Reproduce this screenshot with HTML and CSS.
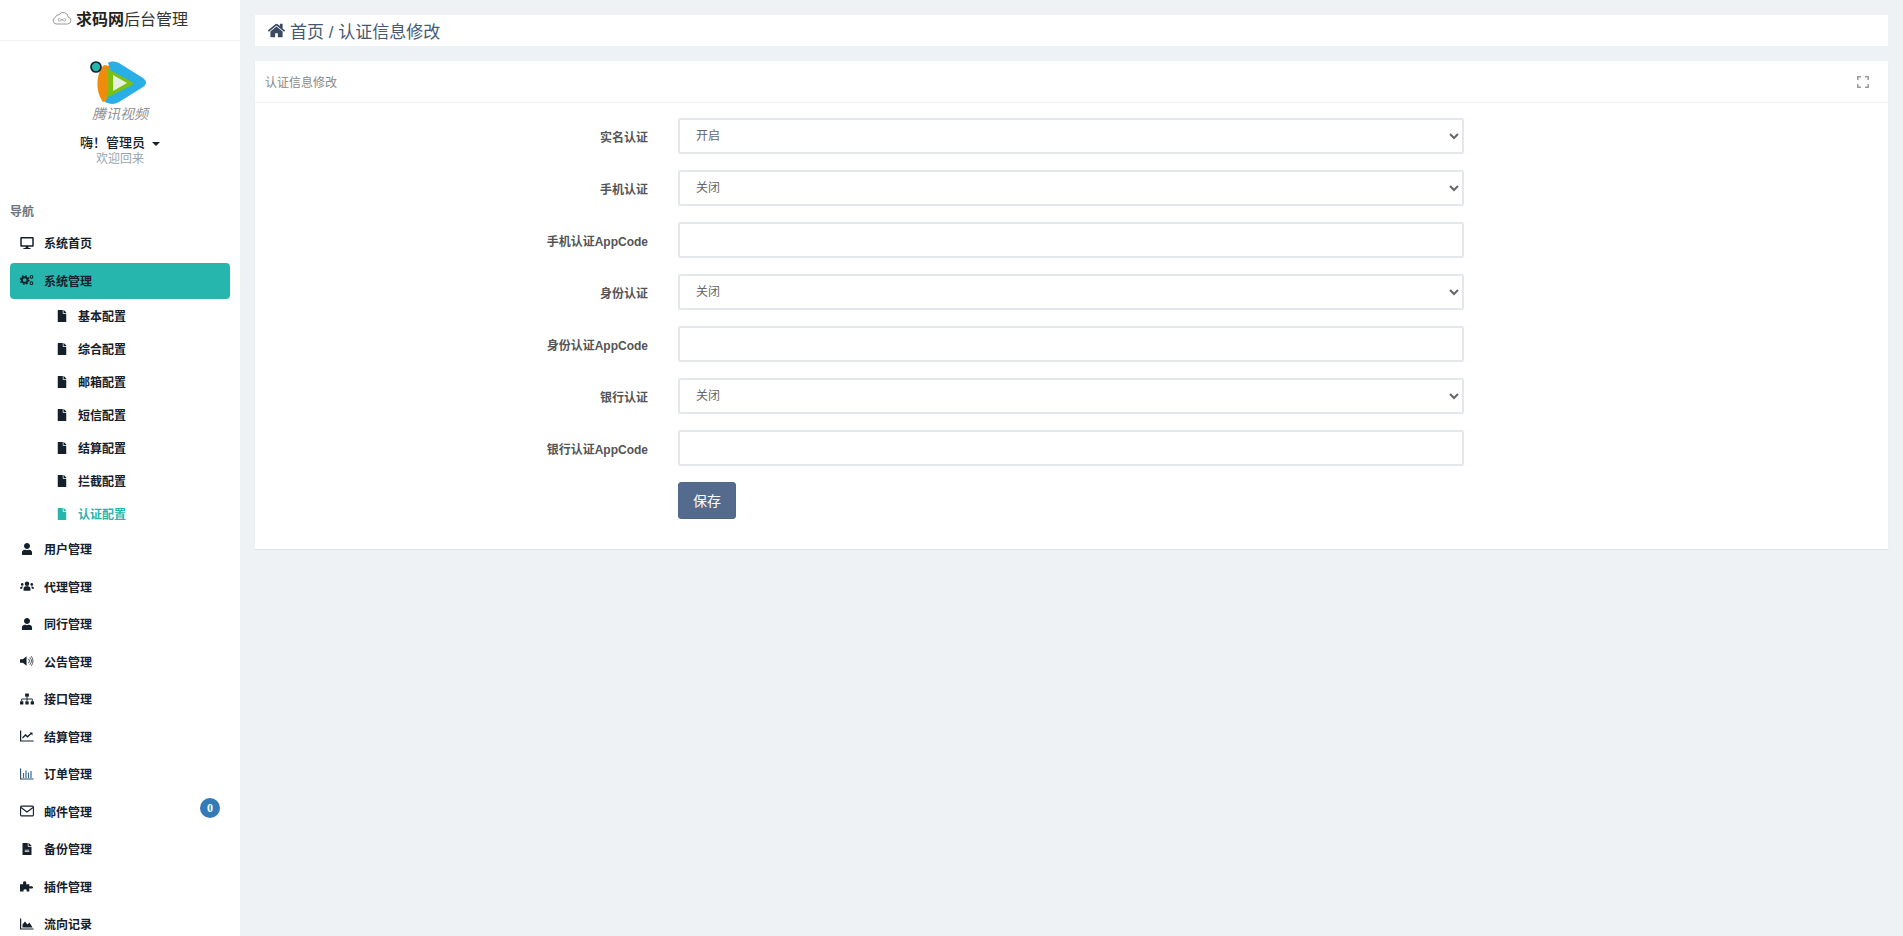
FILE: index.html
```html
<!DOCTYPE html>
<html lang="en">

<head>
    <meta charset="UTF-8">
    <meta name="viewport" content="width=device-width, initial-scale=1.0">
    <title>认证信息修改</title>
    <link rel="stylesheet" href="styles.css">
</head>

<body>
    <aside class="sidebar">
        <div class="brand">
            <svg class="brand-icon" viewBox="0 0 20 14"><path d="M5 13h10.500a3.500 3.500 0 0 0 .7-6.900A5 5 0 0 0 7 3.800 3 3 0 0 0 3.500 6.400 3.400 3.400 0 0 0 5 13z" fill="none" stroke="#999" stroke-width="1"/><path d="M7.500 7.500a1.300 1.300 0 1 0 0 2.600c1.500 0 3.500-2.600 5-2.600a1.300 1.300 0 1 1 0 2.600c-1.500 0-3.500-2.600-5-2.600z" fill="none" stroke="#999" stroke-width=".8"/></svg>
            <b>求码网</b><span>后台管理</span>
        </div>

        <div class="user">
            <div class="logo">
                <svg viewBox="0 0 60 46" width="60" height="46">
                    <path d="M14 5C7 11 4 30 13 42l8-2L20 6z" fill="#f08c0c"/>
                    <path d="M18 3c2-2 7-2 11 0l24 15c4 3 4 6 0 9L29 42c-5 3-10 2-14 0 7-10 8-28 3-39z" fill="#29aee6"/>
                    <path d="M16 8l26 14c2 1 2 2 0 3L16 38c3-10 3-20 0-30z" fill="#7cc10f"/>
                    <path d="M23 15l14 8-14 8z" fill="#e6efe0"/>
                    <circle cx="6" cy="7" r="5" fill="#26b5ad" stroke="#14202a" stroke-width="1.700"/>
                </svg>
                <div class="logo-text">腾讯视频</div>
            </div>
            <div class="user-name">嗨！管理员<i class="caret"></i></div>
            <div class="user-note">欢迎回来</div>
        </div>

        <div class="nav-title">导航</div>

        <ul class="nav">
            <li><a>
                <svg class="ico" viewBox="0 0 576 512"><path d="M528 0H48C21.500 0 0 21.500 0 48v320c0 26.500 21.500 48 48 48h192l-16 48h-72c-13.300 0-24 10.700-24 24s10.700 24 24 24h272c13.300 0 24-10.700 24-24s-10.700-24-24-24h-72l-16-48h192c26.500 0 48-21.500 48-48V48c0-26.500-21.500-48-48-48zm-16 352H64V64h448v288z"/></svg>
                系统首页</a></li>
            <li class="active"><a>
                <svg class="ico" viewBox="0 0 15 12"><circle cx="5" cy="6" r="3" fill="none" stroke="#15202b" stroke-width="2"/><circle cx="5" cy="6" r="4.500" fill="none" stroke="#15202b" stroke-width="1.500" stroke-dasharray="1.800 1.730"/><circle cx="12.300" cy="2.600" r="1.500" fill="none" stroke="#15202b" stroke-width="1.100"/><circle cx="12.300" cy="9.400" r="1.500" fill="none" stroke="#15202b" stroke-width="1.100"/></svg>
                系统管理</a></li>
        </ul>

        <ul class="subnav">
            <li><svg class="file" viewBox="0 0 384 512"><use href="#file"/></svg>基本配置</li>
            <li><svg class="file" viewBox="0 0 384 512"><use href="#file"/></svg>综合配置</li>
            <li><svg class="file" viewBox="0 0 384 512"><use href="#file"/></svg>邮箱配置</li>
            <li><svg class="file" viewBox="0 0 384 512"><use href="#file"/></svg>短信配置</li>
            <li><svg class="file" viewBox="0 0 384 512"><use href="#file"/></svg>结算配置</li>
            <li><svg class="file" viewBox="0 0 384 512"><use href="#file"/></svg>拦截配置</li>
            <li class="current"><svg class="file" viewBox="0 0 384 512"><use href="#file"/></svg>认证配置</li>
        </ul>

        <ul class="nav">
            <li><a><svg class="ico" viewBox="0 0 448 512"><use href="#user"/></svg>用户管理</a></li>
            <li><a>
                <svg class="ico" viewBox="0 0 15 11"><circle cx="7.500" cy="3" r="2.400"/><path d="M3.800 10.500V8.500c0-1.600 1.200-2.700 2.400-2.700h2.600c1.200 0 2.400 1.100 2.400 2.700v2z"/><circle cx="2.400" cy="3.800" r="1.400"/><circle cx="12.600" cy="3.800" r="1.400"/><path d="M0 8.500c0-1.600.8-2.500 2-2.500h1.200c-.6.700-.9 1.500-.9 2.500zM15 8.500c0-1.600-.8-2.500-2-2.500h-1.200c.6.700.9 1.500.9 2.500z"/></svg>
                代理管理</a></li>
            <li><a><svg class="ico" viewBox="0 0 448 512"><use href="#user"/></svg>同行管理</a></li>
            <li><a>
                <svg class="ico" viewBox="0 0 15 12"><path d="M0 4h3l4-3v10L3 8H0z"/><path d="M9 3.500a3.500 3.500 0 0 1 0 5M10.500 2a6 6 0 0 1 0 8M12 .8a8 8 0 0 1 0 10.400" fill="none" stroke="#15202b" stroke-width=".8"/></svg>
                公告管理</a></li>
            <li><a>
                <svg class="ico" viewBox="0 0 15 12"><rect x="5.500" y="0" width="4" height="3.500" rx=".6"/><rect x="0" y="8.500" width="3.600" height="3.500" rx=".6"/><rect x="5.700" y="8.500" width="3.600" height="3.500" rx=".6"/><rect x="11.400" y="8.500" width="3.600" height="3.500" rx=".6"/><path d="M7.500 3.500v5M1.800 8.500V6h11.400v2.500" fill="none" stroke="#15202b" stroke-width="1"/></svg>
                接口管理</a></li>
            <li><a>
                <svg class="ico" viewBox="0 0 14 12"><path d="M.6 .5v10.500h13" fill="none" stroke="#15202b" stroke-width="1.200"/><path d="M2.500 8l3-3 2 1.800L11 3.500" fill="none" stroke="#15202b" stroke-width="1.300"/><path d="M9.500 2.500h3v3z"/></svg>
                结算管理</a></li>
            <li><a>
                <svg class="ico" viewBox="0 0 14 12"><path d="M.6 .5v10.500h13" fill="none" stroke="#2a4a68" stroke-width="1.100"/><path d="M3.500 5v5M6 2.500V10M8.500 4.500V10M11 3v7" fill="none" stroke="#3a6a90" stroke-width="1.200"/></svg>
                订单管理</a></li>
            <li><a>
                <svg class="ico" viewBox="0 0 14 11"><rect x=".6" y=".6" width="12.800" height="9.800" rx="1" fill="none" stroke="#15202b" stroke-width="1.100"/><path d="M1 2l6 4.500L13 2" fill="none" stroke="#15202b" stroke-width="1.100"/></svg>
                邮件管理</a><span class="badge">0</span></li>
            <li><a>
                <svg class="ico" viewBox="0 0 384 512"><path d="M224 136V0H24C10.700 0 0 10.700 0 24v464c0 13.300 10.700 24 24 24h336c13.300 0 24-10.700 24-24V160H248c-13.200 0-24-10.800-24-24zm64 236c0 6.600-5.400 12-12 12H108c-6.600 0-12-5.400-12-12v-8c0-6.600 5.400-12 12-12h168c6.600 0 12 5.400 12 12zm0-64c0 6.600-5.400 12-12 12H108c-6.600 0-12-5.400-12-12v-8c0-6.600 5.400-12 12-12h168c6.600 0 12 5.400 12 12zm96-186.100v6.100H256V0h6.100c6.400 0 12.500 2.500 17 7l97.900 98c4.500 4.500 7 10.600 7 16.900z"/></svg>
                备份管理</a></li>
            <li><a>
                <svg class="ico" viewBox="0 0 15 12"><path d="M0 4h3.500C3 3 3 1 5 1s2 2 1.500 3H10v2.500c1-.5 4-.5 4 1s-3 1.500-4 1V12H7c.5-1 .5-2.500-1.500-2.500S3.500 11 4 12H0z"/></svg>
                插件管理</a></li>
            <li><a>
                <svg class="ico" viewBox="0 0 14 12"><path d="M.6 .5v10.500h13" fill="none" stroke="#15202b" stroke-width="1.200"/><path d="M2.500 9.500V6.500L5 3.500l2.500 3L9.500 4.500l3 5z"/></svg>
                流向记录</a></li>
        </ul>

        <svg class="defs" width="0" height="0">
            <symbol id="file" viewBox="0 0 384 512"><path d="M224 136V0H24C10.700 0 0 10.700 0 24v464c0 13.300 10.700 24 24 24h336c13.300 0 24-10.700 24-24V160H248c-13.200 0-24-10.800-24-24zm160-14.100v6.100H256V0h6.100c6.400 0 12.500 2.500 17 7l97.900 98c4.500 4.500 7 10.600 7 16.900z"/></symbol>
            <symbol id="user" viewBox="0 0 448 512"><path d="M224 256c70.700 0 128-57.300 128-128S294.700 0 224 0 96 57.300 96 128s57.300 128 128 128zm89.600 32h-16.700c-22.200 10.200-46.900 16-72.900 16s-50.600-5.800-72.900-16h-16.700C60.200 288 0 348.200 0 422.400V464c0 26.500 21.500 48 48 48h352c26.500 0 48-21.500 48-48v-41.600c0-74.200-60.200-134.400-134.400-134.400z"/></symbol>
        </svg>
    </aside>

    <main class="main">
        <div class="crumb">
            <svg class="home" viewBox="0 0 1792 1792"><path d="M1472 992v480q0 26-19 45t-45 19h-384v-384h-256v384h-384q-26 0-45-19t-19-45v-480q0-1 .5-3t.5-3l575-474 575 474q1 2 1 6zm223-69l-62 74q-8 9-21 11h-3q-13 0-21-7l-692-577-692 577q-12 8-24 7-13-2-21-11l-62-74q-8-10-7-23.500t11-21.500l719-599q32-26 76-26t76 26l244 204v-195q0-14 9-23t23-9h192q14 0 23 9t9 23v408l219 182q10 8 11 21.500t-7 23.500z"/></svg>
            首页 / 认证信息修改
        </div>

        <section class="panel">
            <div class="panel-head">
                <span>认证信息修改</span>
                <svg class="expand" viewBox="0 0 12 12"><path d="M.8 4V.8H4M8 .8h3.200V4M11.200 8v3.200H8M4 11.200H.8V8" fill="none" stroke="#999" stroke-width="1.500"/></svg>
            </div>
            <form class="form">
                <div class="row">
                    <label>实名认证</label>
                    <select class="field"><option>开启</option><option>关闭</option></select>
                </div>
                <div class="row">
                    <label>手机认证</label>
                    <select class="field"><option>关闭</option><option>开启</option></select>
                </div>
                <div class="row">
                    <label>手机认证AppCode</label>
                    <input class="field" type="text">
                </div>
                <div class="row">
                    <label>身份认证</label>
                    <select class="field"><option>关闭</option><option>开启</option></select>
                </div>
                <div class="row">
                    <label>身份认证AppCode</label>
                    <input class="field" type="text">
                </div>
                <div class="row">
                    <label>银行认证</label>
                    <select class="field"><option>关闭</option><option>开启</option></select>
                </div>
                <div class="row">
                    <label>银行认证AppCode</label>
                    <input class="field" type="text">
                </div>
                <div class="row">
                    <label></label>
                    <button class="btn" type="button">保存</button>
                </div>
            </form>
        </section>
    </main>
</body>

</html>
```

FILE: styles.css
```css
* {
    box-sizing: border-box;
}

html,
body {
    height: 100%;
}

body {
    display: flex;
    margin: 0;
    overflow: hidden;
    background-color: #eef2f4;
    color: #15202b;
    font-family: "Liberation Sans", "Noto Sans CJK SC", sans-serif;
    font-size: 12px;
}

ul {
    margin: 0;
    padding: 0;
    list-style: none;
}

.sidebar {
    flex: none;
    width: 240px;
    height: 936px;
    overflow: hidden;
    background-color: #fff;
}

.brand {
    display: flex;
    justify-content: center;
    align-items: center;
    height: 41px;
    padding-bottom: 4px;
    border-bottom: 1px solid #eef0f2;
    color: #333;
    font-size: 16px;
}

.brand b {
    color: #222;
}

.brand-icon {
    width: 20px;
    height: 14px;
    margin-right: 4px;
}

.user {
    display: flex;
    flex-direction: column;
    align-items: center;
    height: 160px;
    padding-top: 19px;
}

.logo {
    width: 60px;
    height: 65px;
    overflow: hidden;
}

.logo svg {
    display: block;
}

.logo-text {
    margin-top: -1px;
    color: #777;
    font-size: 14px;
    font-style: italic;
    line-height: 18px;
    text-align: center;
    white-space: nowrap;
    opacity: 0.8;
}

.user-name {
    margin-top: 9px;
    color: #15202b;
    font-size: 13px;
    line-height: 18px;
    font-weight: 500;
}

.caret {
    display: inline-block;
    margin-left: 7px;
    border-top: 4px solid #15202b;
    border-right: 4px solid transparent;
    border-left: 4px solid transparent;
    vertical-align: middle;
}

.user-note {
    color: #98a6ad;
    font-size: 12px;
    line-height: 15px;
}

.nav-title {
    height: 23px;
    padding-left: 10px;
    color: #6c757d;
    font-size: 12px;
    font-weight: bold;
    line-height: 22px;
}

.nav li {
    position: relative;
    height: 36px;
    margin-top: 1.5px;
}

.nav a {
    display: flex;
    align-items: center;
    height: 36px;
    margin: 0 10px;
    padding: 0 0 2px 10px;
    border-radius: 4px;
    font-weight: bold;
}

.nav .active a {
    background-color: #26b6ae;
}

.ico {
    flex: none;
    width: 14px;
    height: 12px;
    margin-right: 10px;
    fill: #15202b;
}

.subnav li {
    display: flex;
    align-items: center;
    height: 33px;
    padding-left: 57px;
    font-weight: bold;
}

.subnav .current {
    color: #26b6ae;
}

.file {
    width: 10px;
    height: 12px;
    margin-right: 11px;
    fill: #15202b;
}

.current .file {
    fill: #26b6ae;
}

.defs {
    position: absolute;
}

.badge {
    position: absolute;
    top: 4px;
    right: 20px;
    width: 20px;
    height: 20px;
    border-radius: 50%;
    background-color: #337ab7;
    color: #fff;
    font-family: "Liberation Serif", serif;
    font-size: 12px;
    font-weight: bold;
    line-height: 20px;
    text-align: center;
}

.main {
    flex: 1;
    min-width: 0;
    padding: 15px 15px 0;
}

.crumb {
    display: flex;
    align-items: center;
    height: 31px;
    padding-left: 12px;
    background-color: #fff;
    color: #455a72;
    font-size: 17px;
}

.home {
    width: 19px;
    height: 19px;
    margin-right: 4px;
    fill: #3b4a63;
}

.panel {
    height: 488px;
    margin-top: 15px;
    background-color: #fff;
    box-shadow: 0 1px 1px rgba(0, 0, 0, 0.06);
}

.panel-head {
    display: flex;
    justify-content: space-between;
    align-items: center;
    height: 42px;
    padding: 0 19px 0 10px;
    border-bottom: 1px solid #edf0f5;
    color: #888;
    font-size: 12px;
}

.expand {
    width: 12px;
    height: 12px;
}

.form {
    padding-top: 15px;
}

.row {
    display: flex;
    align-items: center;
    height: 36px;
    margin-bottom: 16px;
}

.row label {
    flex: none;
    width: 393px;
    padding-right: 0;
    color: #555;
    font-weight: bold;
    text-align: right;
}

.field {
    width: 786px;
    height: 36px;
    margin-left: 30px;
    padding: 0 12px;
    border: 2px solid #e4e8ec;
    border-radius: 2px;
    outline: none;
    background-color: #fff;
    color: #666;
    font-family: inherit;
    font-size: 12px;
}

.btn {
    width: 58px;
    height: 37px;
    margin-left: 30px;
    border: 1px solid #50668a;
    border-radius: 3px;
    background-color: #556b8d;
    color: #fff;
    font-family: inherit;
    font-size: 14px;
}
```
